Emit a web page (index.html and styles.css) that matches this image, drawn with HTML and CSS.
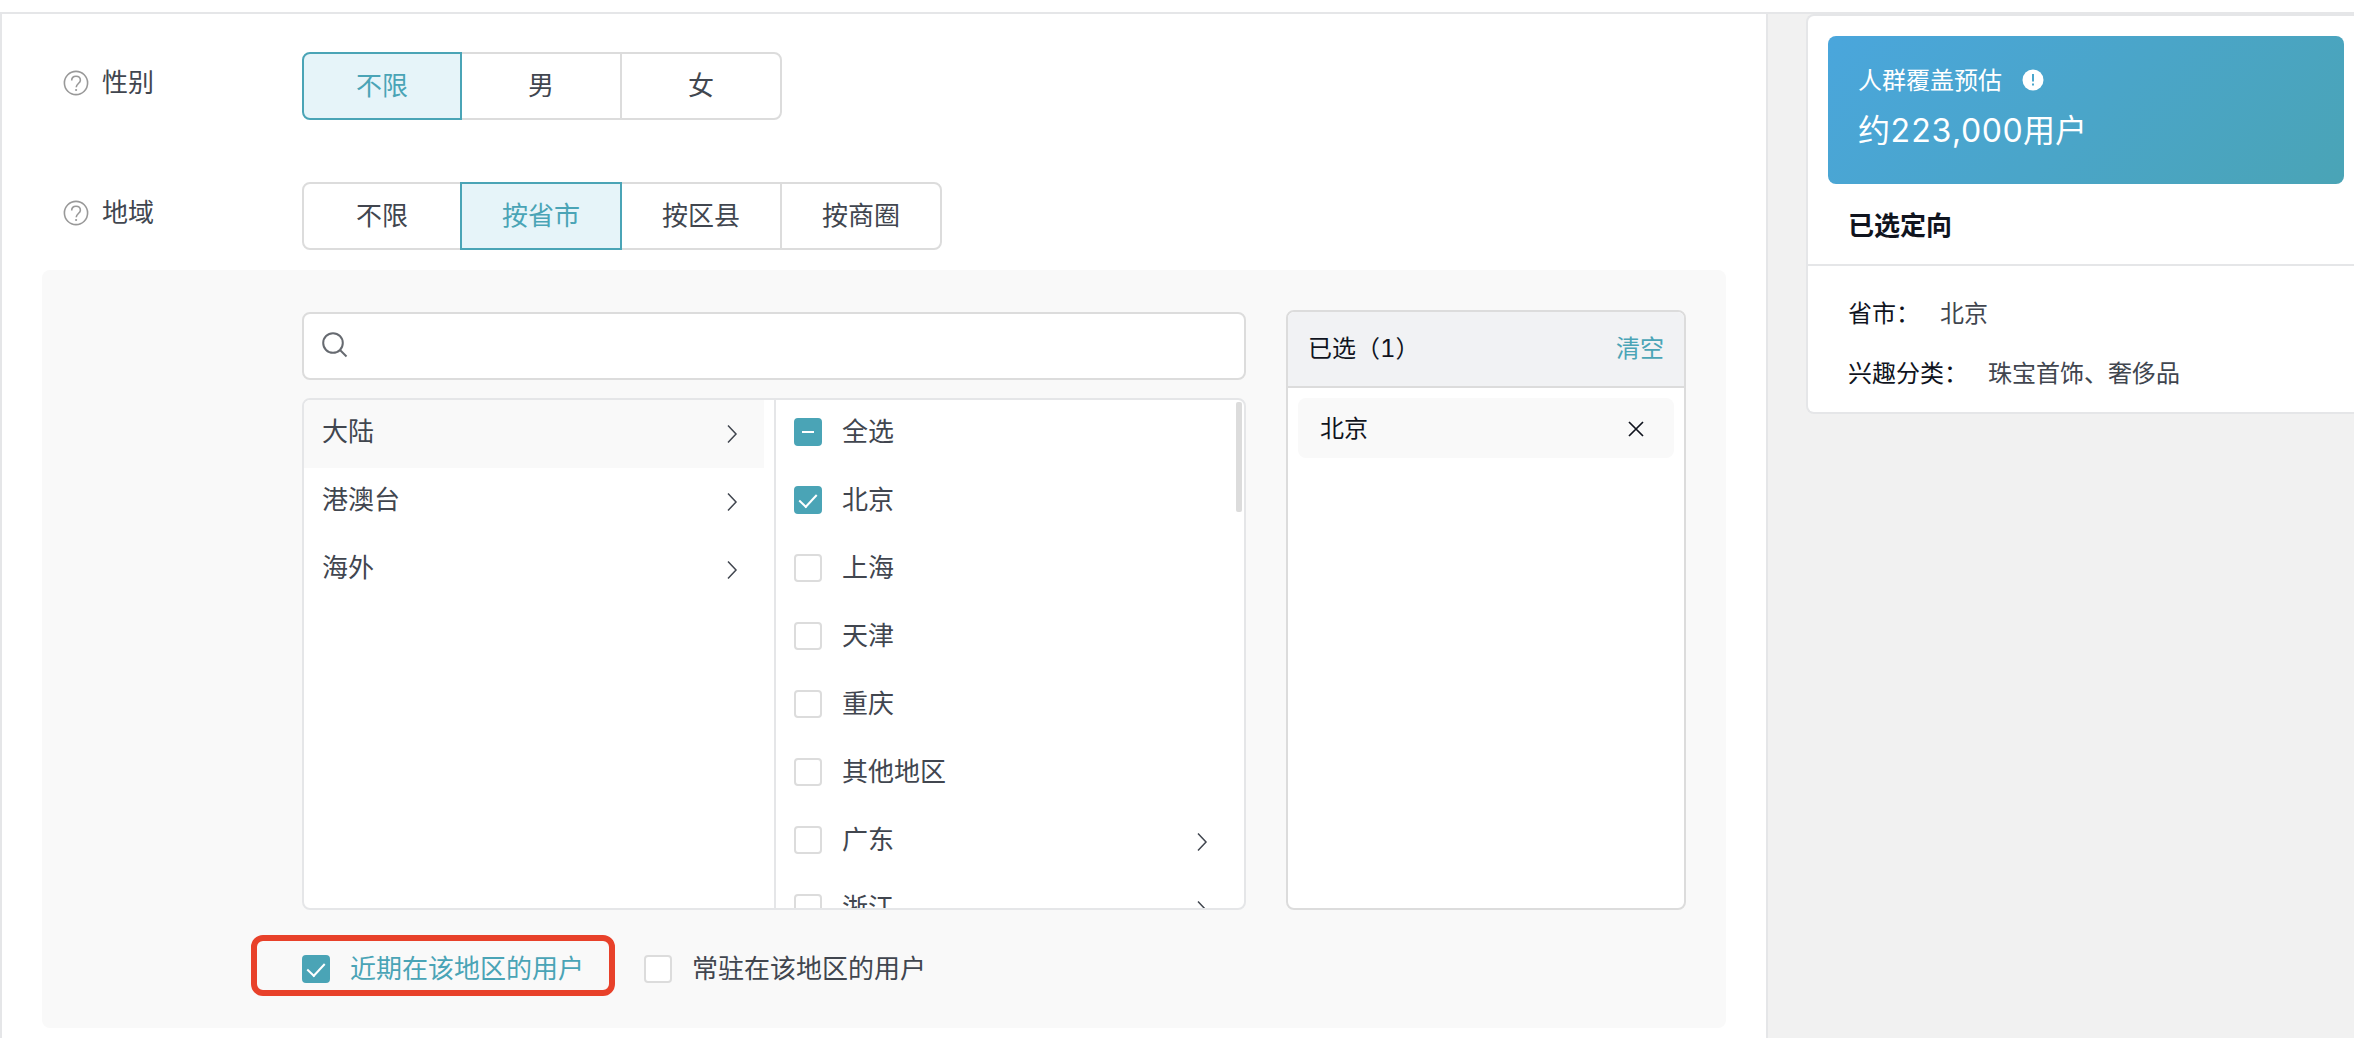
FILE: index.html
```html
<!DOCTYPE html>
<html lang="zh-CN">
<head>
<meta charset="utf-8">
<meta name="viewport" content="width=device-width, initial-scale=1">
<title>人群定向</title>
<link rel="stylesheet" href="styles.css">
</head>
<body>
<svg class="sprite" aria-hidden="true">
  <symbol id="help" viewBox="0 0 26 26"><circle cx="13" cy="13" r="11.6" fill="none" stroke="currentColor" stroke-width="1.6"/><path d="M8.7 10.6C8.7 7.8 10.6 6.3 13 6.3s4.4 1.5 4.4 3.9c0 3.1-4.2 3.6-4.2 7.1" fill="none" stroke="currentColor" stroke-width="1.6"/><circle cx="13.1" cy="20" r="1.1"/></symbol>
  <symbol id="chevron" viewBox="0 0 20 20"><path d="M6 1.5 14 10 6 18.5" fill="none" stroke="currentColor" stroke-width="1.5"/></symbol>
</svg>
<div class="page">
  <main class="main">
    <div class="field">
      <div class="field-label"><svg class="help"><use href="#help"/></svg><span>性别</span></div>
      <div class="segments">
        <button type="button" class="segment active">不限</button>
        <button type="button" class="segment">男</button>
        <button type="button" class="segment">女</button>
      </div>
    </div>
    <div class="field">
      <div class="field-label"><svg class="help"><use href="#help"/></svg><span>地域</span></div>
      <div class="segments">
        <button type="button" class="segment">不限</button>
        <button type="button" class="segment active">按省市</button>
        <button type="button" class="segment">按区县</button>
        <button type="button" class="segment">按商圈</button>
      </div>
    </div>
    <section class="panel">
      <div class="picker">
        <div class="source">
          <label class="search">
            <svg class="search-icon" viewBox="0 0 26 26"><circle cx="11" cy="11" r="9.8" fill="none" stroke="currentColor" stroke-width="2"/><path d="m18 18 6.5 6.5" stroke="currentColor" stroke-width="2"/></svg>
            <input type="text" class="search-input" aria-label="搜索">
          </label>
          <div class="tree">
            <div class="column regions">
              <button type="button" class="row current"><span>大陆</span><svg class="chevron"><use href="#chevron"/></svg></button>
              <button type="button" class="row"><span>港澳台</span><svg class="chevron"><use href="#chevron"/></svg></button>
              <button type="button" class="row"><span>海外</span><svg class="chevron"><use href="#chevron"/></svg></button>
            </div>
            <div class="column places">
              <label class="row"><input type="checkbox" class="check partial"><span>全选</span></label>
              <label class="row"><input type="checkbox" class="check" checked><span>北京</span></label>
              <label class="row"><input type="checkbox" class="check"><span>上海</span></label>
              <label class="row"><input type="checkbox" class="check"><span>天津</span></label>
              <label class="row"><input type="checkbox" class="check"><span>重庆</span></label>
              <label class="row"><input type="checkbox" class="check"><span>其他地区</span></label>
              <label class="row"><input type="checkbox" class="check"><span>广东</span><svg class="chevron"><use href="#chevron"/></svg></label>
              <label class="row"><input type="checkbox" class="check"><span>浙江</span><svg class="chevron"><use href="#chevron"/></svg></label>
              <div class="thumb"></div>
            </div>
          </div>
        </div>
        <div class="selected">
          <div class="selected-head"><span>已选（1）</span><button type="button" class="clear">清空</button></div>
          <div class="selected-item"><span>北京</span><button type="button" class="remove" aria-label="移除"><svg class="cross" viewBox="0 0 18 18"><path d="m2 2 14 14M16 2 2 16" stroke="currentColor" stroke-width="1.7"/></svg></button></div>
        </div>
      </div>
      <div class="scopes">
        <label class="scope marked"><input type="checkbox" class="check" checked><span>近期在该地区的用户</span></label>
        <label class="scope"><input type="checkbox" class="check"><span>常驻在该地区的用户</span></label>
      </div>
    </section>
  </main>
  <aside class="side">
    <div class="card">
      <div class="estimate">
        <div class="estimate-title"><span>人群覆盖预估</span><svg class="info" viewBox="0 0 22 22"><circle cx="11" cy="11" r="10.5" fill="#fff"/><path d="M11 5v7.5M11 14.5v2" stroke="#4aa6cc" stroke-width="2"/></svg></div>
        <div class="estimate-value">约223,000用户</div>
      </div>
      <h2 class="card-title">已选定向</h2>
      <dl class="summary">
        <div class="summary-row"><dt>省市：</dt><dd>北京</dd></div>
        <div class="summary-row"><dt>兴趣分类：</dt><dd>珠宝首饰、奢侈品</dd></div>
      </dl>
    </div>
  </aside>
</div>
</body>
</html>
```

FILE: styles.css
```css
* { box-sizing: border-box; }

body {
  margin: 0;
  background: #fff;
  color: #41464f;
  font: 26px/36px Inter, "Noto Sans CJK SC", sans-serif;
  font-variant-numeric: tabular-nums;
}

button {
  margin: 0;
  padding: 0;
  border: 0;
  background: none;
  color: inherit;
  font: inherit;
  cursor: pointer;
}

.sprite { display: none; }

.page {
  display: flex;
  min-height: calc(100vh - 12px);
  margin-top: 12px;
  border-top: 2px solid #e5e6e8;
}

.main {
  flex: 1;
  min-width: 0;
  padding: 38px 40px 10px;
  border: solid #e5e6e8;
  border-width: 0 2px;
}

.field {
  display: flex;
  align-items: flex-start;
  margin-bottom: 62px;
}

.field + .field { margin-bottom: 20px; }

.field-label {
  display: flex;
  align-items: center;
  gap: 13px;
  width: 260px;
  padding: 13px 0 0 21px;
}

.help {
  width: 26px;
  height: 26px;
  color: #999;
  fill: #999;
}

.segments { display: flex; }

.segment {
  position: relative;
  width: 162px;
  height: 68px;
  margin-left: -2px;
  border: 2px solid #dcdcdc;
  background: #fff;
}

.segment:first-child {
  width: 160px;
  margin-left: 0;
  border-radius: 8px 0 0 8px;
}

.segment:last-child { border-radius: 0 8px 8px 0; }

.segment.active {
  z-index: 1;
  border-color: #4aa4b6;
  background: #e6f4f9;
  color: #4aa4b6;
}

.panel {
  padding: 40px 40px 36px 260px;
  border-radius: 8px;
  background: #f9f9f9;
}

.picker {
  display: flex;
  gap: 40px;
}

.source {
  display: flex;
  flex: 1;
  flex-direction: column;
  gap: 18px;
  min-width: 0;
  padding-top: 2px;
}

.search {
  display: flex;
  align-items: center;
  gap: 12px;
  height: 68px;
  padding: 0 18px 2px;
  border: 2px solid #dcdcdc;
  border-radius: 8px;
  background: #fff;
}

.search-icon {
  width: 26px;
  height: 26px;
  color: #666a70;
}

.search-input {
  flex: 1;
  min-width: 0;
  border: 0;
  outline: 0;
  background: none;
  color: inherit;
  font: inherit;
}

.tree {
  display: flex;
  height: 512px;
  overflow: hidden;
  border: 2px solid #e5e6e8;
  border-radius: 8px;
  background: #fff;
}

.column {
  position: relative;
  overflow: hidden;
}

.regions {
  width: calc(50% + 2px);
  padding-right: 10px;
  border-right: 2px solid #e5e6e8;
}

.places { flex: 1; }

.row {
  display: flex;
  align-items: center;
  width: 100%;
  height: 68px;
  padding: 0 22px 4px 18px;
  text-align: left;
}

.places .row {
  gap: 20px;
  padding-right: 32px;
}

.row.current { background: #f9f9f9; }

.chevron {
  width: 20px;
  height: 20px;
  margin: 4px 0 0 auto;
}

.check {
  flex: none;
  width: 28px;
  height: 28px;
  margin: 0;
  border: 2px solid #dcdcdc;
  border-radius: 4px;
  appearance: none;
  background: #fff;
}

.check:checked,
.check.partial {
  display: grid;
  place-items: center;
  border-color: #4aa4b6;
  background: #4aa4b6;
}

.check:checked::before {
  width: 8px;
  height: 15px;
  margin-bottom: 4px;
  border: solid #fff;
  border-width: 0 2px 2px 0;
  content: "";
  transform: rotate(43deg);
}

.check.partial::before {
  width: 12px;
  height: 2px;
  background: #fff;
  content: "";
}

.thumb {
  position: absolute;
  top: 2px;
  right: 2px;
  width: 6px;
  height: 110px;
  border-radius: 2px;
  background: #dcdcdc;
}

.selected {
  width: 400px;
  border: 2px solid #dcdcdc;
  border-radius: 8px;
  background: #fff;
  color: #10141e;
  font-size: 24px;
  overflow: hidden;
}

.selected-head {
  display: flex;
  align-items: center;
  justify-content: space-between;
  height: 76px;
  padding: 0 20px;
  border-bottom: 2px solid #dcdcdc;
  background: #f1f2f4;
}

.clear { color: #4aa4b6; }

.selected-item {
  display: flex;
  align-items: center;
  justify-content: space-between;
  height: 60px;
  margin: 10px;
  padding: 2px 29px 0 22px;
  border-radius: 8px;
  background: #f9f9f9;
}

.remove { display: flex; }

.cross {
  width: 18px;
  height: 18px;
}

.scopes {
  display: flex;
  gap: 60px;
  padding-top: 36px;
}

.scope {
  position: relative;
  display: flex;
  align-items: center;
  gap: 20px;
  height: 46px;
}

.marked { color: #4aa4b6; }

.marked::after {
  position: absolute;
  inset: -11px -31px -4px -51px;
  border: 6px solid #e8412a;
  border-radius: 12px;
  content: "";
  pointer-events: none;
}

.side {
  width: 586px;
  padding-left: 38px;
  background: #f1f1f1;
}

.card {
  border: 2px solid #e5e6e8;
  border-right: 0;
  border-radius: 8px 0 0 8px;
  background: #fff;
  font-size: 24px;
}

.estimate {
  height: 148px;
  margin: 20px 10px 0 20px;
  padding: 27px 30px;
  border-radius: 8px;
  background: linear-gradient(135deg, #4aa6dc, #4aa4b6);
  color: #fff;
}

.estimate-title {
  display: flex;
  align-items: center;
  gap: 20px;
}

.info {
  width: 22px;
  height: 22px;
  margin-bottom: 2px;
}

.estimate-value {
  padding-top: 8px;
  font-size: 32px;
  line-height: 48px;
}

.card-title {
  margin: 0;
  padding: 24px 40px 20px;
  border-bottom: 2px solid #e5e6e8;
  color: #10141e;
  font-size: 26px;
  font-weight: 700;
}

.summary {
  display: grid;
  gap: 24px;
  margin: 0;
  padding: 30px 40px 20px;
}

.summary-row {
  display: flex;
  gap: 20px;
}

.summary dt { color: #10141e; }

.summary dd { margin: 0; }
```
